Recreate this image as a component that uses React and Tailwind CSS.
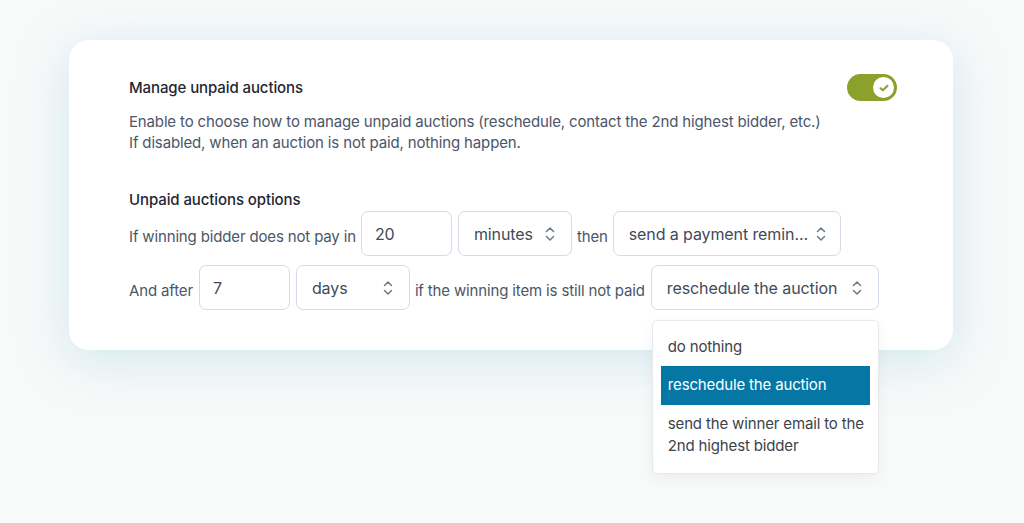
import React from "react";

const Chevrons = () => (
  <svg width="10" height="16" viewBox="0 0 10 16" fill="none" stroke="#6b7a8c" strokeWidth="1.5" strokeLinecap="round" strokeLinejoin="round" className="shrink-0">
    <path d="M1.5 5.5 5 2l3.5 3.5" />
    <path d="M1.5 10.5 5 14l3.5-3.5" />
  </svg>
);

const NumberBox = ({ value }) => (
  <div className="w-[91px] h-[45px] shrink-0 flex items-center pl-[13px] rounded-[7px] border border-[#d3dce6] bg-white text-[16px] text-[#3f4a5a]">
    {value}
  </div>
);

const SelectBox = ({ label, width }) => (
  <div className={`${width} h-[45px] shrink-0 flex items-center justify-between gap-2 pl-[15px] pr-[16px] rounded-[7px] border border-[#d3dce6] bg-white text-[16px] tracking-[-0.1px] text-[#3f4a5a]`}>
    <span className="whitespace-nowrap">{label}</span>
    <Chevrons />
  </div>
);

export default function App() {
  return (
    <div
      className="w-full h-[523px] bg-[#f8f9f9] pt-[40px] pl-[69px] overflow-hidden"
      style={{ fontFamily: "Inter, 'Noto Sans', sans-serif" }}
    >
      <div className="w-[884px] rounded-[20px] bg-white shadow-[0_10px_50px_rgba(150,208,224,0.4)] pl-[60px] pr-[56px] pt-[37px] pb-[40px]">
        {/* Header */}
        <div className="h-[21px] flex items-center justify-between">
          <h2 className="text-[15px] leading-[21px] font-medium tracking-[-0.1px] text-[#1f2733]">Manage unpaid auctions</h2>
          <div className="w-[50px] h-[27px] shrink-0 rounded-full bg-[#8ca12b] flex items-center justify-end pr-[3px]">
            <div className="w-[21px] h-[21px] rounded-full bg-white flex items-center justify-center">
              <svg width="10" height="8" viewBox="0 0 10 8" fill="none" stroke="#8ca12b" strokeWidth="2" strokeLinecap="round" strokeLinejoin="round">
                <path d="M1.5 4.2 3.8 6.3 8.5 1.7" />
              </svg>
            </div>
          </div>
        </div>
        <p className="mt-[13px] text-[15px] leading-[21px] tracking-[-0.15px] text-[#4b5668]">
          Enable to choose how to manage unpaid auctions (reschedule, contact the 2nd highest bidder, etc.)
          <br />
          If disabled, when an auction is not paid, nothing happen.
        </p>

        {/* Options */}
        <h3 className="mt-[36px] text-[15px] leading-[21px] font-medium tracking-[-0.1px] text-[#1f2733]">Unpaid auctions options</h3>

        <div className="mt-px flex items-center gap-[5px] text-[15px] tracking-[-0.15px] text-[#4b5668]">
          <span className="mt-[7px]">If winning bidder does not pay in</span>
          <NumberBox value="20" />
          <div className="ml-px">
            <SelectBox label="minutes" width="w-[114px]" />
          </div>
          <span className="mt-[7px]">then</span>
          <SelectBox label="send a payment remin..." width="w-[228px]" />
        </div>

        <div className="mt-[9px] flex items-center gap-[5px] text-[15px] tracking-[-0.15px] text-[#4b5668]">
          <span className="mt-[7px] mr-px">And after</span>
          <NumberBox value="7" />
          <div className="ml-px">
            <SelectBox label="days" width="w-[114px]" />
          </div>
          <span className="mt-[7px] mr-px">if the winning item is still not paid</span>
          <div className="relative">
            <SelectBox label="reschedule the auction" width="w-[228px]" />
            <div className="absolute left-px top-[55px] w-[227px] rounded-[5px] border border-[#e6e9ed] bg-white p-2 shadow-[0_4px_14px_rgba(0,0,0,0.05)] text-[15px] tracking-[-0.15px] text-[#3c434a]">
              <div className="h-[37px] flex items-center px-[7px]">do nothing</div>
              <div className="h-[39px] flex items-center px-[7px] bg-[#0677a4] text-white">reschedule the auction</div>
              <div className="py-[8px] pl-[7px] pr-[4px] leading-[22px]">send the winner email to the 2nd highest bidder</div>
            </div>
          </div>
        </div>
      </div>
    </div>
  );
}
